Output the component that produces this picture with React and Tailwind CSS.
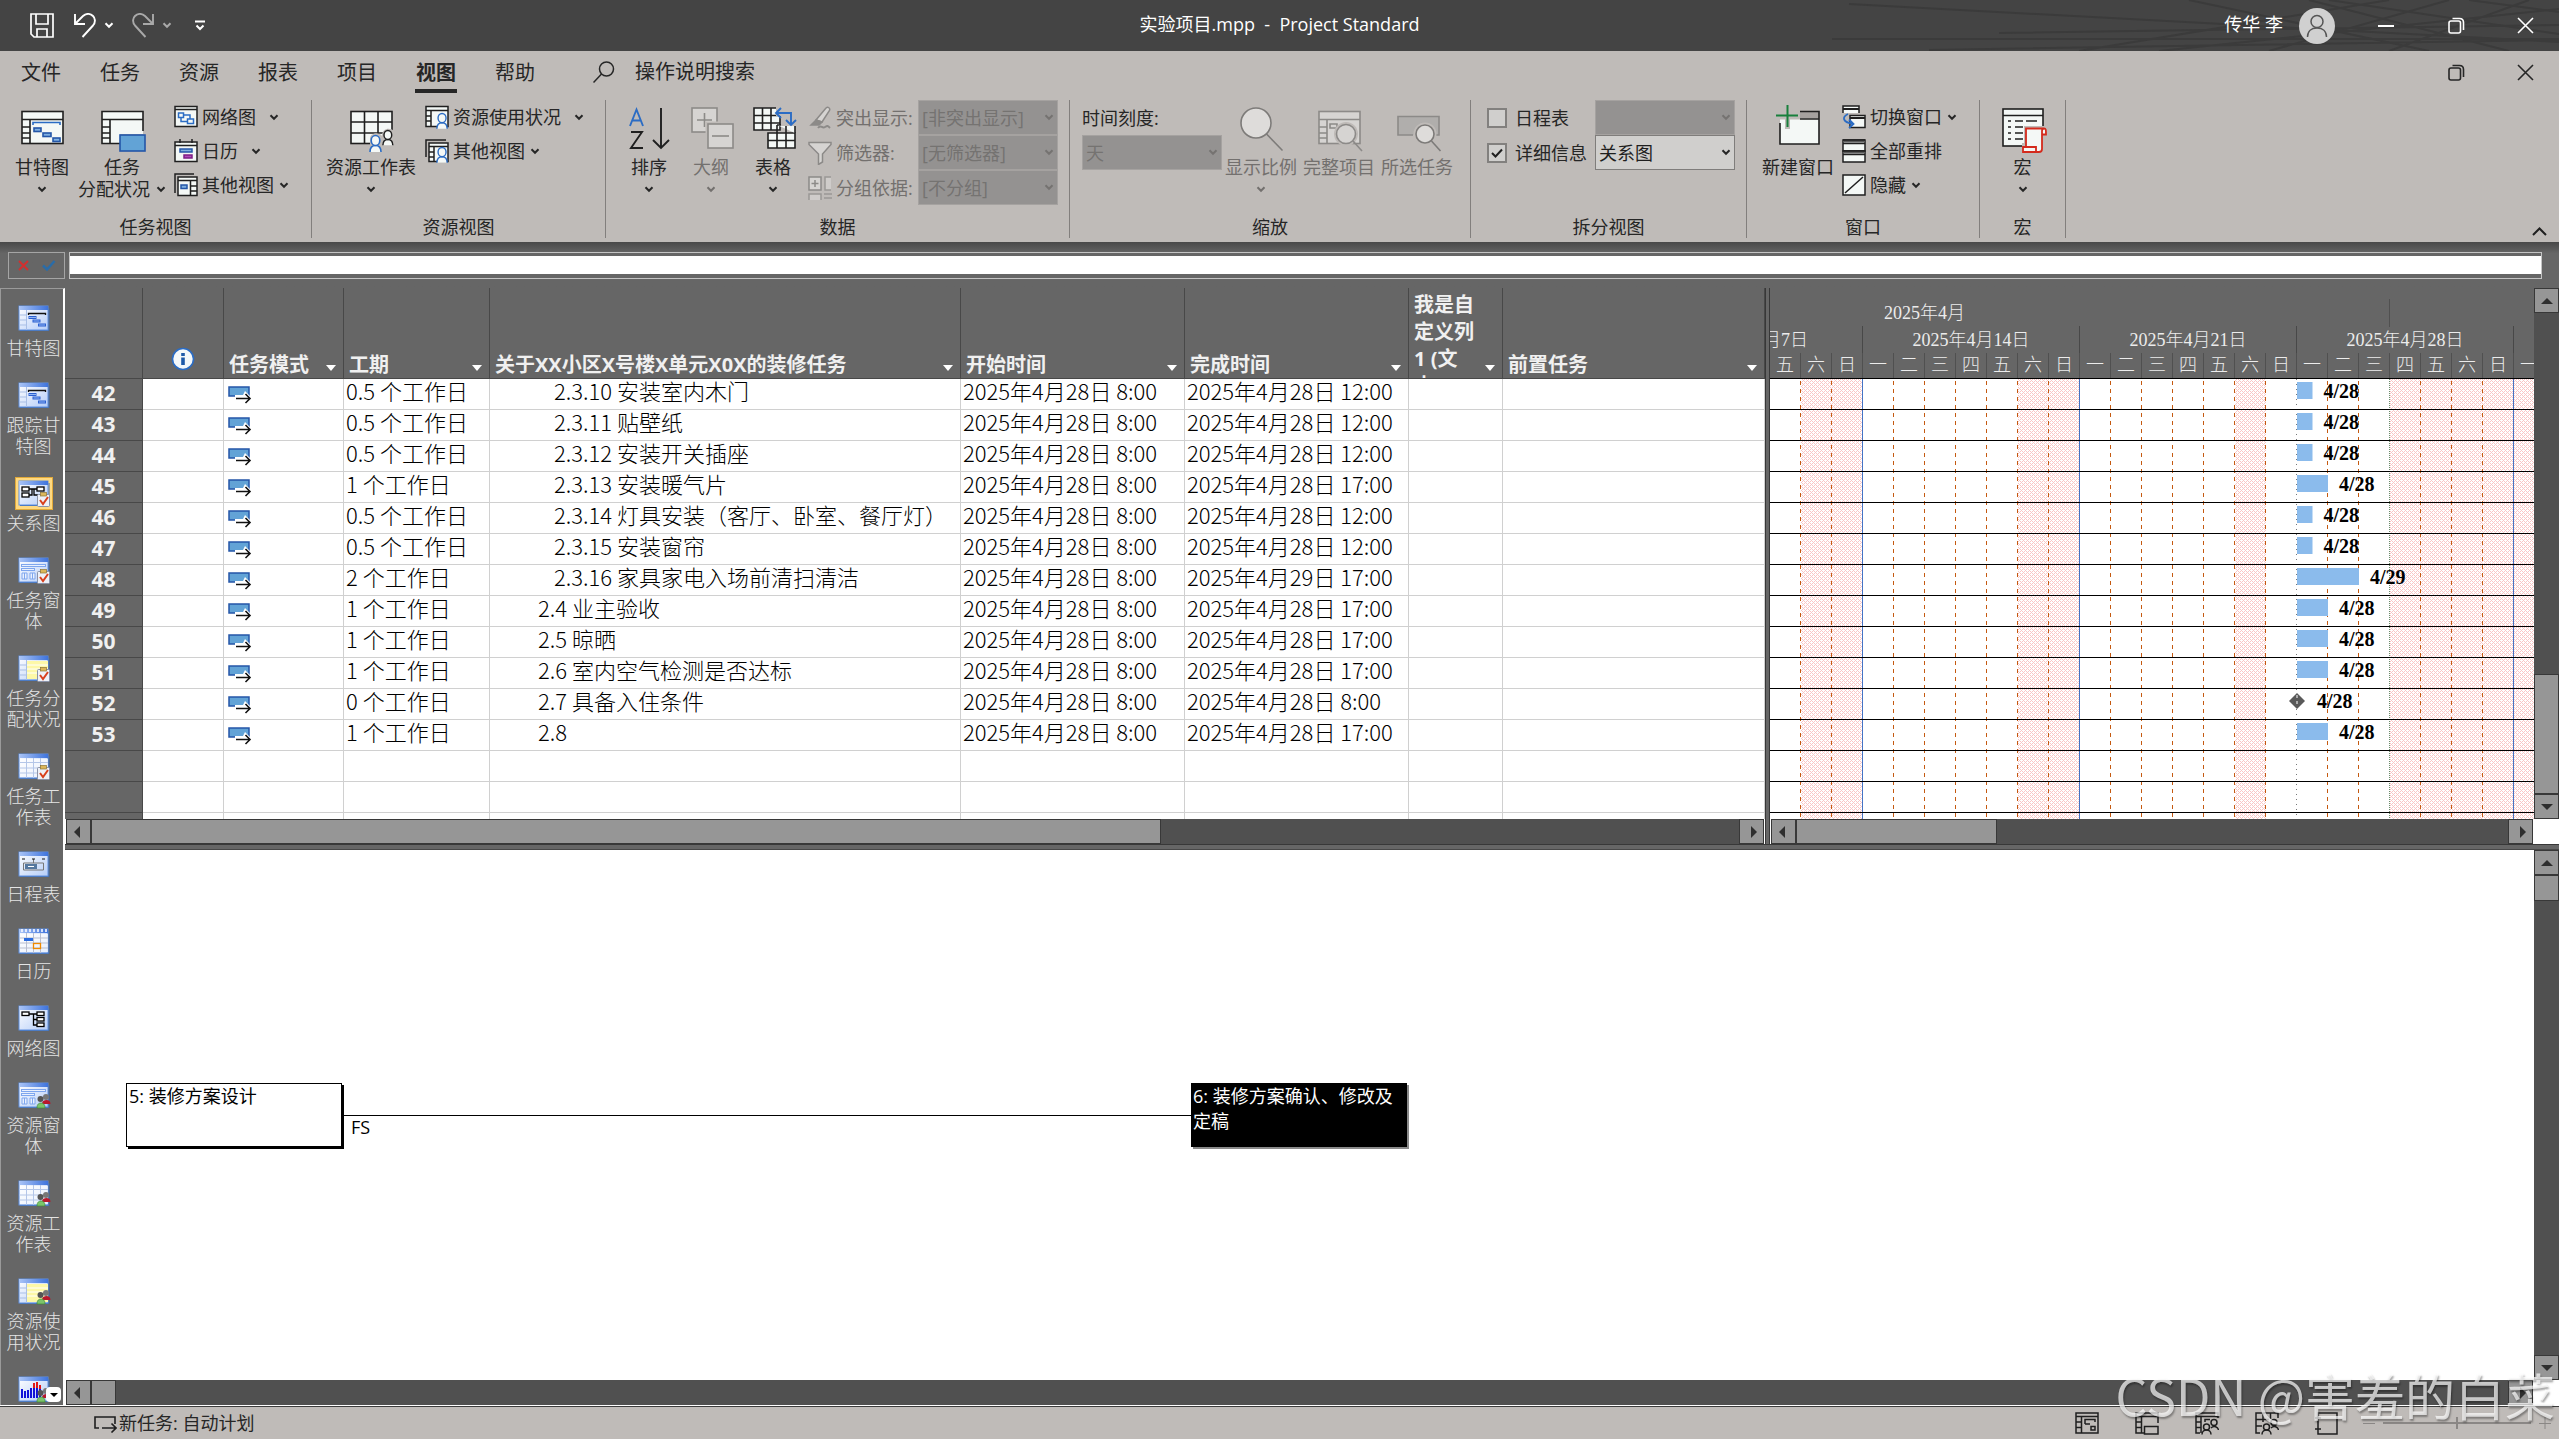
import { useState } from "react";

const UI_FONT = "font-['Open_Sans','Noto_Sans_CJK_SC',sans-serif]";
const SHEET_FONT = "font-['Noto_Sans_CJK_SC',sans-serif]";
const SONG_FONT = "font-['Liberation_Serif','Noto_Sans_CJK_SC',serif]";

const tabs = ["文件", "任务", "资源", "报表", "项目", "视图", "帮助"];

const tasks = [
  { id: 42, duration: "0.5 个工作日", name: "2.3.10 安装室内木门", level: 3, finish: "2025年4月28日 12:00", days: 0.5, label: "4/28" },
  { id: 43, duration: "0.5 个工作日", name: "2.3.11 贴壁纸", level: 3, finish: "2025年4月28日 12:00", days: 0.5, label: "4/28" },
  { id: 44, duration: "0.5 个工作日", name: "2.3.12 安装开关插座", level: 3, finish: "2025年4月28日 12:00", days: 0.5, label: "4/28" },
  { id: 45, duration: "1 个工作日", name: "2.3.13 安装暖气片", level: 3, finish: "2025年4月28日 17:00", days: 1, label: "4/28" },
  { id: 46, duration: "0.5 个工作日", name: "2.3.14 灯具安装（客厅、卧室、餐厅灯）", level: 3, finish: "2025年4月28日 12:00", days: 0.5, label: "4/28" },
  { id: 47, duration: "0.5 个工作日", name: "2.3.15 安装窗帘", level: 3, finish: "2025年4月28日 12:00", days: 0.5, label: "4/28" },
  { id: 48, duration: "2 个工作日", name: "2.3.16 家具家电入场前清扫清洁", level: 3, finish: "2025年4月29日 17:00", days: 2, label: "4/29" },
  { id: 49, duration: "1 个工作日", name: "2.4 业主验收", level: 2, finish: "2025年4月28日 17:00", days: 1, label: "4/28" },
  { id: 50, duration: "1 个工作日", name: "2.5 晾晒", level: 2, finish: "2025年4月28日 17:00", days: 1, label: "4/28" },
  { id: 51, duration: "1 个工作日", name: "2.6 室内空气检测是否达标", level: 2, finish: "2025年4月28日 17:00", days: 1, label: "4/28" },
  { id: 52, duration: "0 个工作日", name: "2.7 具备入住条件", level: 2, finish: "2025年4月28日 8:00", days: 0, label: "4/28" },
  { id: 53, duration: "1 个工作日", name: "2.8", level: 2, finish: "2025年4月28日 17:00", days: 1, label: "4/28" },
];
const START = "2025年4月28日 8:00";
const DAY = 31;
const ROW = 31;

/* ---------- shared bits ---------- */

function Chevron({ className = "" }) {
  return (
    <svg className={className} width="10" height="7" viewBox="0 0 10 7" fill="none" stroke="currentColor" strokeWidth="2">
      <path d="M1.5 1.2 5 4.8 8.5 1.2" />
    </svg>
  );
}

function Triangle({ dir }) {
  const d = {
    left: "M8 1v12L2 7z",
    right: "M6 1v12l6-6z",
    up: "M1 10h12L7 4z",
    down: "M1 4h12L7 10z",
  }[dir];
  return (
    <svg width="14" height="14" viewBox="0 0 14 14" fill="#2e2e2e">
      <path d={d} />
    </svg>
  );
}

function ScrollButton({ dir, label }) {
  return (
    <button
      aria-label={label}
      className="flex size-[25px] shrink-0 items-center justify-center border border-[#383838] bg-[#969696]"
    >
      <Triangle dir={dir} />
    </button>
  );
}

function HScroll({ thumb }) {
  return (
    <div className="bg-white px-px">
      <div className="flex h-[25px] bg-[#505050]">
        <ScrollButton dir="left" label="向左滚动" />
        <div className={`h-[25px] border border-[#383838] bg-[#969696] ${thumb}`} />
        <div className="flex-1" />
        <ScrollButton dir="right" label="向右滚动" />
      </div>
    </div>
  );
}

function VScroll({ atTop, thumb }) {
  return (
    <div className="flex w-[25px] shrink-0 flex-col bg-[#505050]">
      <ScrollButton dir="up" label="向上滚动" />
      {!atTop && <div className="flex-1" />}
      <div className={`border border-[#383838] bg-[#969696] ${thumb}`} />
      {atTop && <div className="flex-1" />}
      <ScrollButton dir="down" label="向下滚动" />
    </div>
  );
}

/* ---------- ribbon icons ---------- */

const INK = "#1f1f1f";
const PAPER = "#f4f8f6";

function Big({ children }) {
  return (
    <svg className="overflow-visible" width="46" height="46" viewBox="-1 0 46 46" fill="none" stroke={INK} strokeWidth="1.6">
      {children}
    </svg>
  );
}

function Small({ children }) {
  return (
    <svg className="shrink-0" width="24" height="24" viewBox="0 0 24 24" fill="none" stroke={INK} strokeWidth="1.5">
      {children}
    </svg>
  );
}

function Person({ x, y, s = 1, color = "#2b6cc4", halo = PAPER }) {
  return (
    <g transform={`translate(${x} ${y}) scale(${s})`} stroke={color} fill={halo}>
      <path d="M1 17c0-4 2-6.500 5.500-6.500S12 13 12 17" />
      <ellipse cx="6.500" cy="5.500" rx="4.300" ry="5" />
    </g>
  );
}

const GanttIcon = () => (
  <Big>
    <rect x="2" y="4.500" width="41" height="32" fill={PAPER} />
    <path d="M2 12.500h41M10 12.500v24M2 20h8M2 26h8M2 31h8" />
    <path d="M13 18v-2.500h27V18" stroke="#2b6cc4" />
    <g fill="#7fb0e0" stroke="#2456a8">
      <rect x="14" y="21" width="7" height="3.500" />
      <rect x="23" y="26" width="8" height="3.500" />
      <rect x="33" y="31" width="7" height="3.500" />
    </g>
  </Big>
);

const TaskUsageIcon = () => (
  <Big>
    <path d="M20 36.500H2v-32h41V27H20z" fill={PAPER} stroke="none" />
    <path d="M20 36.500H2v-32h41V24M2 12.500h41M10 12.500v24M2 20h8M2 26h8M2 31h8" />
    <rect x="20" y="28" width="25" height="16" fill="#62a3d6" stroke="#2456a8" />
  </Big>
);

const NetworkIcon = () => (
  <Small>
    <rect x="1" y="1.500" width="22" height="20" fill={PAPER} />
    <path d="M1 4.500h22" />
    <g stroke="#2b6cc4">
      <rect x="4.500" y="8" width="5" height="4.500" />
      <rect x="13.500" y="14" width="6" height="4.500" />
      <path d="M7 12.500v4h6.500M9.500 10h6.500v4" />
    </g>
  </Small>
);

const CalendarIcon = () => (
  <Small>
    <rect x="1" y="3" width="22" height="19.500" fill={PAPER} />
    <path d="M1 6.500h22M6 0v4M18 0v4" />
    <rect x="6" y="10" width="12" height="3" fill="#7fb0e0" stroke="#2456a8" />
    <rect x="10" y="16" width="8" height="3" fill="#b14bb8" stroke="#7d1e86" />
  </Small>
);

const OtherViewsIcon = () => (
  <Small>
    <path d="M1 20V1h19" />
    <rect x="4" y="4" width="19" height="18.500" fill={PAPER} />
    <path d="M4 7.500h19M16.500 7.500v15M16.500 13h6.500M16.500 18h6.500" />
    <rect x="7" y="12" width="6" height="3.500" fill="#7fb0e0" stroke="#2456a8" />
  </Small>
);

const ResourceSheetIcon = () => (
  <Big>
    <rect x="2" y="4.500" width="41" height="32" fill={PAPER} />
    <path d="M2 15h41M2 26h41M15.500 4.500v32M29 4.500v32" />
    <path d="M21 45V31c1-6 10-6 12-2 0-8 8-9 12-5v21z" fill="#bfbbb8" stroke="none" />
    <Person x="33" y="23" s="0.900" color={INK} />
    <Person x="20" y="28" />
  </Big>
);

const ResourceUsageIcon = () => (
  <Small>
    <rect x="1" y="1.500" width="22" height="20" fill={PAPER} />
    <path d="M1 5.500h22M6 5.500v16M1 11h5M1 16h5" />
    <Person x="11" y="8" s="0.930" />
  </Small>
);

const ResourceOtherIcon = () => (
  <Small>
    <path d="M1 18V1h20" />
    <rect x="4" y="4" width="19" height="18.500" fill={PAPER} />
    <path d="M4 7.500h19M9 7.500v15M4 13h5M4 18h5" />
    <Person x="11" y="8" s="0.930" />
  </Small>
);

const SortIcon = () => (
  <Big>
    <g strokeWidth="1.900">
      <path d="M3 19 9.500 2.500 16 19M5.500 13.500h8" stroke="#2b6cc4" />
      <path d="M4 25h11L4 41h12" />
      <path d="M34 1v40M26 33l8 8 8-8" />
    </g>
  </Big>
);

const OutlineIcon = () => (
  <Big>
    <g stroke="#8c8a88" fill="#d6d4d2">
      <rect x="3" y="1" width="25" height="24" />
      <path d="M15.500 6v14M8 13h15" />
      <rect x="19" y="17" width="25" height="24" stroke="#bfbbb8" strokeWidth="5" />
      <rect x="19" y="17" width="25" height="24" />
      <path d="M23 29h17" />
    </g>
  </Big>
);

const TablesIcon = () => (
  <Big>
    <path d="M3 1h26v22H3z" fill={PAPER} />
    <path d="M3 8.500h26M3 16h26M11.500 1v22M20 1v22" />
    <path d="M17 26h27v15H17z" fill={PAPER} />
    <path d="M26 18h18v8" fill={PAPER} />
    <path d="M17 33.500h27M26 18v23M35 18v23" />
    <path d="M25 0h20v19H30V9h-5z" fill="#bfbbb8" stroke="none" />
    <path d="M40 18V6H25M30 1l-5 5 5 5M35 13l5 5 5-5" stroke="#2b6cc4" strokeWidth="1.900" />
  </Big>
);

const HighlightIcon = () => (
  <Small>
    <g stroke="#8c8a88" fill="#d6d4d2">
      <path d="M18 2c2-1.500 4.500 0 3.500 2.500L14 16l-6-2z" />
      <path d="M8 14l6 2-3 3H3z" fill="#8c8a88" />
      <path d="M10 22c3-4 4 1 7-1s3-1 5 1" fill="none" strokeWidth="2" />
    </g>
  </Small>
);

const FilterIcon = () => (
  <Small>
    <path d="M1 1.500h22v2L14.500 13v8l-4 2.500V13L1 3.500z" fill="#d6d4d2" stroke="#8c8a88" />
  </Small>
);

const GroupByIcon = () => (
  <Small>
    <g stroke="#8c8a88" fill="#d6d4d2">
      <rect x="1" y="1" width="12" height="13" />
      <path d="M7 4v7M3.500 7.500h7" />
      <path d="M23 1h-6v13h6M1 24v-6h12v6M16 18h8M16 22h8" opacity="0.700" />
    </g>
  </Small>
);

const ZoomIcon = () => (
  <Big>
    <g stroke="#7d7b79" fill="#dedcda">
      <circle cx="17" cy="16" r="15" />
      <path d="m27.500 27 16 16.500" />
    </g>
  </Big>
);

const EntireProjectIcon = () => (
  <Big>
    <g stroke="#8c8a88" fill="#d6d4d2">
      <rect x="2" y="4.500" width="41" height="32" />
      <path d="M2 12.500h41M10 12.500v24M2 20h8M2 26h8M2 31h8M13 17h7v4h-7z" />
      <circle cx="29" cy="27" r="12" fill="#bfbbb8" stroke="none" />
      <circle cx="29" cy="27" r="9.500" />
      <path d="m36 34 9 10" />
    </g>
  </Big>
);

const SelectedTasksIcon = () => (
  <Big>
    <g stroke="#7d7b79">
      <path d="M18 28H3V9.500h41V28h-3" fill="#b0aeac" stroke="#8c8a88" />
      <circle cx="30" cy="27" r="11.500" fill="#bfbbb8" stroke="none" />
      <circle cx="30" cy="27" r="9" fill="#dedcda" />
      <path d="m36.500 34 9 10" />
    </g>
  </Big>
);

const NewWindowIcon = () => (
  <Big>
    <path d="M4 11v26h39V4.500H24v8H4z" fill={PAPER} stroke="none" />
    <path d="M24 4.500h19v7H24z" fill="#a5a19f" stroke="none" />
    <path d="M24 4.500h19v32.500H4V16M24 12h19" />
    <path d="M9 0h5v22H9zM0 6h22v5H0z" fill="#bfbbb8" stroke="none" />
    <path d="M11.500-2v22M0 8.500h22" stroke="#18803c" strokeWidth="2" />
  </Big>
);

const SwitchWindowIcon = () => (
  <Small>
    <path d="M1 8V1h16v7" fill={PAPER} />
    <path d="M1 4h16" strokeWidth="2" />
    <rect x="8" y="10.500" width="15" height="12" fill={PAPER} />
    <path d="M8 13h15" strokeWidth="2" />
    <path d="M6 9c-6 3-6 8 5 10M7 14.500l4.500 4.500L7 23" stroke="#2b6cc4" strokeWidth="1.800" />
  </Small>
);

const ArrangeIcon = () => (
  <Small>
    <rect x="1" y="1" width="22" height="11" fill={PAPER} />
    <rect x="1" y="12" width="22" height="11" fill={PAPER} />
    <path d="M1 2.500h22M1 13.500h22" stroke="#5a5a5a" strokeWidth="2" />
    <path d="M1 1h22M1 4.500h22M1 12h22M1 15.500h22" />
  </Small>
);

const HideIcon = () => (
  <Small>
    <rect x="1" y="2" width="22" height="20" fill={PAPER} />
    <path d="M3 20 21 4" />
  </Small>
);

const MacroIcon = () => (
  <Big>
    <rect x="2" y="2" width="40" height="37" fill={PAPER} />
    <path d="M2 8.500h40" />
    <path d="M7 14h3M14 14h8M25 14h11M7 20h3M14 20h8M7 26h3M14 26h8M7 32h3M14 32h8" />
    <path d="M43 19h-20v17h-2v5h22z" fill="#bfbbb8" stroke="none" />
    <path d="M25 40V21.500h18c2 0 2 1 2 6h-4V42c0 2-1 3-3 3H22v-5h13v5M41 27v-3c0-2 1-2.500 2-2.500" fill={PAPER} stroke="#d42a1c" strokeWidth="1.800" />
  </Big>
);

/* ---------- ribbon ---------- */

function RibbonGroup({ title, className, children }) {
  return (
    <section className={`flex shrink-0 flex-col border-r border-[#827f7d] ${className}`}>
      <div className="flex h-[116px]">{children}</div>
      <h2 className="text-center text-lg leading-[22px]">{title}</h2>
    </section>
  );
}

function BigButton({ icon, label, second, chevron = true, disabled, className }) {
  return (
    <button
      disabled={disabled}
      className={`flex flex-col items-center gap-[3px] pt-[7px] disabled:text-[#73706e] ${className}`}
    >
      {icon}
      <span className="text-lg leading-[22px] whitespace-nowrap">{label}</span>
      <span className="flex h-[16px] items-center gap-[6px] text-lg leading-[16px] whitespace-nowrap">
        {second}
        {chevron && <Chevron />}
      </span>
    </button>
  );
}

function SmallButton({ icon, label, chevron = true, wide }) {
  return (
    <button className={`flex h-[34px] items-center text-lg whitespace-nowrap ${wide ? "gap-[13px]" : "gap-[5px]"}`}>
      <span className="flex items-center gap-1">
        {icon}
        {label}
      </span>
      {chevron && <Chevron />}
    </button>
  );
}

function Dropdown({ id, label, value, disabled }) {
  return (
    <div className="relative h-[35px] w-[140px]">
      <select
        id={id}
        aria-label={label}
        disabled={disabled}
        defaultValue={value}
        className="size-full appearance-none border border-[#7f7d7b] bg-[#d0cfcd] pl-[3px] text-lg text-[#1f1f1f] disabled:border-[#a5a2a0] disabled:bg-[#949291] disabled:text-[#757371] disabled:opacity-100"
      >
        <option>{value}</option>
      </select>
      <Chevron className={`pointer-events-none absolute top-[14px] right-[4px] ${disabled ? "text-[#757371]" : ""}`} />
    </div>
  );
}

function DataRow({ id, icon, label, value }) {
  return (
    <div className="flex h-[35px] items-center">
      <label htmlFor={id} className="flex w-[110px] items-center gap-1 text-lg whitespace-nowrap text-[#73706e]">
        {icon}
        {label}
      </label>
      <Dropdown id={id} value={value} disabled />
    </div>
  );
}

function SplitRow({ id, label, checked, value, disabled }) {
  const [on, setOn] = useState(checked);
  return (
    <div className="flex h-[35px] items-center">
      <label htmlFor={id} className="flex w-[108px] items-center gap-2 text-lg whitespace-nowrap">
        <span className="relative flex size-5">
          <input
            id={id}
            type="checkbox"
            checked={on}
            onChange={(e) => setOn(e.target.checked)}
            className="size-5 appearance-none border-2 border-[#82807e] bg-[#d0cfcd]"
          />
          {on && (
            <svg className="pointer-events-none absolute inset-0" width="20" height="20" viewBox="0 0 20 20" fill="none" stroke={INK} strokeWidth="2">
              <path d="m5 10 3.500 3.500L15 6.500" />
            </svg>
          )}
        </span>
        {label}
      </label>
      <Dropdown label={`${label}视图`} value={value} disabled={disabled} />
    </div>
  );
}

function Ribbon() {
  return (
    <div className="flex h-[144px] items-start bg-[#bfbbb8] pt-[2px] text-[#262626]">
      <RibbonGroup title="任务视图" className="w-[312px]">
        <BigButton className="ml-2 w-[68px]" icon={<GanttIcon />} label="甘特图" />
        <BigButton className="w-[92px]" icon={<TaskUsageIcon />} label="任务" second="分配状况" />
        <div className="ml-[6px] flex flex-col">
          <SmallButton icon={<NetworkIcon />} label="网络图" wide />
          <SmallButton icon={<CalendarIcon />} label="日历" wide />
          <SmallButton icon={<OtherViewsIcon />} label="其他视图" />
        </div>
      </RibbonGroup>
      <RibbonGroup title="资源视图" className="w-[294px]">
        <BigButton className="ml-[13px] w-[92px]" icon={<ResourceSheetIcon />} label="资源工作表" />
        <div className="ml-2 flex flex-col">
          <SmallButton icon={<ResourceUsageIcon />} label="资源使用状况" wide />
          <SmallButton icon={<ResourceOtherIcon />} label="其他视图" />
        </div>
      </RibbonGroup>
      <RibbonGroup title="数据" className="w-[464px]">
        <BigButton className="ml-3 w-[62px]" icon={<SortIcon />} label="排序" />
        <BigButton className="w-[62px]" icon={<OutlineIcon />} label="大纲" disabled />
        <BigButton className="w-[62px]" icon={<TablesIcon />} label="表格" />
        <div className="ml-1 flex flex-col">
          <DataRow id="highlight" icon={<HighlightIcon />} label="突出显示:" value="[非突出显示]" />
          <DataRow id="filter" icon={<FilterIcon />} label="筛选器:" value="[无筛选器]" />
          <DataRow id="groupby" icon={<GroupByIcon />} label="分组依据:" value="[不分组]" />
        </div>
      </RibbonGroup>
      <RibbonGroup title="缩放" className="w-[401px]">
        <div className="ml-3 flex flex-col">
          <label htmlFor="timescale" className="flex h-[35px] items-center text-lg">
            时间刻度:
          </label>
          <Dropdown id="timescale" value="天" disabled />
        </div>
        <BigButton className="w-[78px]" icon={<ZoomIcon />} label="显示比例" disabled />
        <BigButton className="w-[78px]" icon={<EntireProjectIcon />} label="完整项目" chevron={false} disabled />
        <BigButton className="w-[78px]" icon={<SelectedTasksIcon />} label="所选任务" chevron={false} disabled />
      </RibbonGroup>
      <RibbonGroup title="拆分视图" className="w-[276px]">
        <div className="ml-4 flex flex-col">
          <SplitRow id="timeline" label="日程表" checked={false} value="" disabled />
          <SplitRow id="details" label="详细信息" checked value="关系图" />
        </div>
      </RibbonGroup>
      <RibbonGroup title="窗口" className="w-[233px]">
        <BigButton className="ml-3 w-[78px]" icon={<NewWindowIcon />} label="新建窗口" chevron={false} />
        <div className="ml-[5px] flex flex-col">
          <SmallButton icon={<SwitchWindowIcon />} label="切换窗口" />
          <SmallButton icon={<ArrangeIcon />} label="全部重排" chevron={false} />
          <SmallButton icon={<HideIcon />} label="隐藏" />
        </div>
      </RibbonGroup>
      <RibbonGroup title="宏" className="w-[86px]">
        <BigButton className="w-[85px]" icon={<MacroIcon />} label="宏" />
      </RibbonGroup>
      <button aria-label="折叠功能区" className="mr-3 ml-auto self-end pb-[6px]">
        <svg width="15" height="9" viewBox="0 0 15 9" fill="none" stroke={INK} strokeWidth="2">
          <path d="m1 8 6.500-6.500L14 8" />
        </svg>
      </button>
    </div>
  );
}

/* ---------- title bar and tabs ---------- */

function RestoreGlyph() {
  return (
    <svg width="17" height="17" viewBox="0 0 17 17" fill="none" stroke="currentColor" strokeWidth="1.600">
      <rect x="1" y="4" width="11.500" height="12" rx="2" />
      <path d="M4.500 1.500h7c2.500 0 4 1.500 4 4V13" />
    </svg>
  );
}

function CloseGlyph() {
  return (
    <svg width="17" height="17" viewBox="0 0 17 17" fill="none" stroke="currentColor" strokeWidth="1.600">
      <path d="m1 1 15 15M16 1 1 16" />
    </svg>
  );
}

function TitleBar() {
  return (
    <header className="relative flex h-[51px] items-center bg-[#444] text-white">
      <svg className="absolute top-0 right-0" width="730" height="51" viewBox="0 0 730 51" fill="none" stroke="#3b3b3b" strokeWidth="2">
        <path d="M20 4 730 42M170 33l560-8M3 39h727M100 50l630-10M250 51 560 0M360 0l240 51M500 0l230 34M440 51 620 0M560 51 700 0M480 0l200 51M330 51l400-42M640 0l90 12" />
      </svg>
      <div className="relative flex flex-1 items-center">
        <button aria-label="保存" className="ml-[30px]">
          <svg width="24" height="25" viewBox="0 0 24 25" fill="none" stroke="currentColor" strokeWidth="1.700">
            <path d="M1 1h22v23H4l-3-3zM6 1v10h12V1M7 24v-8h10v8" />
          </svg>
        </button>
        <button aria-label="撤消" className="ml-5 flex items-center gap-2">
          <svg width="22" height="25" viewBox="0 0 22 25" fill="none" stroke="currentColor" strokeWidth="1.900">
            <path d="M1 1v10h10M1.500 10.500 9 3c4-3.500 8-2 10 0s3 6 0 9.500L8.500 24" />
          </svg>
          <Chevron />
        </button>
        <button aria-label="恢复" className="ml-[18px] flex items-center gap-2 text-[#a9a9a9]">
          <svg width="22" height="25" viewBox="0 0 22 25" fill="none" stroke="currentColor" strokeWidth="1.900">
            <path d="M21 1v10H11M20.500 10.500 13 3C9 -.5 5 1 3 3s-3 6 0 9.500L13.500 24" />
          </svg>
          <Chevron />
        </button>
        <button aria-label="自定义快速访问工具栏" className="ml-[22px]">
          <svg width="12" height="11" viewBox="0 0 12 11" fill="none" stroke="currentColor" strokeWidth="2">
            <path d="M1 1.500h10M2.500 5.500 6 9l3.500-3.500" />
          </svg>
        </button>
      </div>
      <h1 className="relative pb-1 text-lg whitespace-pre">实验项目.mpp  -  Project Standard</h1>
      <div className="relative flex flex-1 items-center justify-end">
        <span className="pb-1 text-lg">传华 李</span>
        <span className="mx-4 flex size-9 items-center justify-center rounded-full bg-[#d0d0d0]">
          <svg width="22" height="24" viewBox="0 0 22 24" fill="none" stroke="#555" strokeWidth="1.500">
            <circle cx="11" cy="7.500" r="6" />
            <path d="M1.500 23c0-6 4-9 9.500-9s9.500 3 9.500 9" />
          </svg>
        </span>
        <button aria-label="最小化" className="flex w-[70px] justify-center">
          <span className="h-[2px] w-4 bg-white" />
        </button>
        <button aria-label="还原" className="flex w-[70px] justify-center">
          <RestoreGlyph />
        </button>
        <button aria-label="关闭" className="flex w-[68px] justify-center">
          <CloseGlyph />
        </button>
      </div>
    </header>
  );
}

function TabStrip() {
  return (
    <nav className="flex h-[47px] items-start bg-[#bfbbb8] pl-5 text-xl text-[#262626]">
      {tabs.map((tab) => (
        <a key={tab} href="#" className="mr-[37px] flex h-[42px] w-[42px] flex-col items-center justify-between last-of-type:mr-0">
          <span className={`h-[38px] leading-[44px] ${tab === "视图" ? "font-bold" : ""}`}>{tab}</span>
          {tab === "视图" && <span className="h-1 w-full bg-[#262626]" />}
        </a>
      ))}
      <label className="ml-[57px] flex h-[42px] items-center gap-[20px]">
        <svg width="22" height="22" viewBox="0 0 22 22" fill="none" stroke="currentColor" strokeWidth="1.500">
          <circle cx="13.500" cy="8" r="7" />
          <path d="m8.500 13-8 8.500" />
        </svg>
        <input
          aria-label="操作说明搜索"
          placeholder="操作说明搜索"
          className="w-[200px] bg-transparent placeholder:text-[#262626] placeholder:opacity-100"
        />
      </label>
      <div className="ml-auto flex h-[42px] items-center">
        <button aria-label="还原文档窗口" className="flex w-[70px] justify-center">
          <RestoreGlyph />
        </button>
        <button aria-label="关闭文档窗口" className="flex w-[68px] justify-center">
          <CloseGlyph />
        </button>
      </div>
    </nav>
  );
}

function EntryBar() {
  return (
    <div className="h-[46px] bg-gradient-to-b from-[#484848] to-[#666] to-25% pt-[10px]">
      <div className="flex h-[27px] gap-1 pr-[17px] pl-2">
        <div className="flex w-[57px] items-center justify-between border border-[#a5a5a5] pr-[8px] pl-[9px]">
          <button aria-label="取消">
            <svg width="12" height="11" viewBox="0 0 12 11" fill="none" stroke="#d32f2f" strokeWidth="2">
              <path d="m1 1 9 9M10 1 1 10" />
            </svg>
          </button>
          <button aria-label="输入">
            <svg width="14" height="11" viewBox="0 0 14 11" fill="none" stroke="#2a6ca8" strokeWidth="2.500">
              <path d="m1 5.500 4 4L12.500 1" />
            </svg>
          </button>
        </div>
        <div className="flex-1 border border-[#c4c4c4] pt-[3px]">
          <input aria-label="数据编辑栏" className="block h-[18px] w-full bg-white" />
        </div>
      </div>
    </div>
  );
}

/* ---------- view bar ---------- */

function ViewIcon({ kind, badge }) {
  return (
    <svg className="shrink-0 overflow-visible" width="30" height="25" viewBox="0 0 30 25" fill="none">
      <defs>
        <linearGradient id="viewBg" x1="0" y1="0" x2="1" y2="1">
          <stop offset="0" stopColor="#fff" />
          <stop offset="1" stopColor="#b5cdf8" />
        </linearGradient>
        <linearGradient id="viewTop" x1="0" y1="0" x2="1" y2="0">
          <stop offset="0" stopColor="#a9c4f7" />
          <stop offset="1" stopColor="#3f74dc" />
        </linearGradient>
      </defs>
      <path d="M1 24.500h29V2" stroke="#3d68a8" />
      <rect x="0" y="0" width="29" height="24" fill="url(#viewBg)" stroke="#5f8fe0" />
      <rect x="0" y="0" width="29" height="4" fill="url(#viewTop)" />
      {kind === "gantt" && (
        <g>
          <path d="M7.500 4v20M0 9h7M0 14h7M0 19h7" stroke="#a9bfe6" />
          <path d="M9.500 9V7.500h17V9" stroke="#111" strokeWidth="1.300" />
          <g fill="#8fb4f5" stroke="#2b5fcf">
            <rect x="10" y="10.500" width="7" height="2" />
            <rect x="14" y="14" width="7" height="2" />
            <rect x="19.500" y="18" width="7" height="2" />
          </g>
        </g>
      )}
      {kind === "relation" && (
        <g stroke="#000" strokeWidth="1.300" fill="#fff">
          <rect x="3" y="6" width="7" height="4" />
          <rect x="3" y="12" width="7" height="4" />
          <rect x="18" y="6" width="7" height="4" />
          <path d="M10 8h3v6h-3M13 8h5M15 8v6h4" fill="none" />
        </g>
      )}
      {kind === "form" && (
        <g stroke="#7ea6ee" fill="#eaf1fe">
          <rect x="2.500" y="6.500" width="24" height="2" />
          <rect x="2.500" y="10.500" width="13" height="2" />
          <path d="M3 15h5v6H3zM11 15h5v6h-5zM5.500 15v6M13.500 15v6" />
        </g>
      )}
      {kind === "usage" && (
        <g>
          <rect x="8" y="5" width="21" height="18" fill="#fdf8a8" />
          <path d="M8 9h21M8 13h21M8 17h21" stroke="#fff" />
          <path d="M7.500 4v20M0 9h7M0 14h7M0 19h7" stroke="#a9bfe6" />
        </g>
      )}
      {kind === "sheet" && (
        <g>
          <rect x="1" y="5" width="28" height="18" fill="#fff" opacity="0.700" />
          <path d="M0 8.500h29M0 14h29M0 19h29M7.500 4v20M14.500 4v20M21.500 4v20" stroke="#b4c6e8" />
        </g>
      )}
      {kind === "timeline" && (
        <g>
          <path d="M4.500 11h20v7h-20zM14.500 7v4" stroke="#777" />
          <path d="M3 7h3M13 7h3M23 7h3" stroke="#111" />
          <rect x="6" y="12" width="12" height="5" fill="#56789f" />
          <path d="M9 14.500h6" stroke="#fff" />
        </g>
      )}
      {kind === "calendar" && (
        <g>
          <rect x="1" y="5" width="28" height="18" fill="#fff" opacity="0.700" />
          <path d="M0 9h29M0 14h29M0 19h29M7.500 4v20M14.500 4v20M21.500 4v20" stroke="#b9bfd0" />
          <path d="M3 0v3M7 0v3M11 0v3M15 0v3M19 0v3M23 0v3M27 0v3" stroke="#fff" strokeWidth="1.500" />
          <rect x="5" y="9" width="9" height="3" fill="#2b6cdf" />
          <rect x="14.500" y="14.500" width="7" height="5" stroke="#f08a00" strokeWidth="1.300" />
        </g>
      )}
      {kind === "network" && (
        <g stroke="#000" strokeWidth="1.300" fill="#fff">
          <path d="M10 8h8M14.500 8v11H18M14.500 13.500H18" fill="none" />
          <rect x="3" y="6" width="7" height="3.500" />
          <rect x="18" y="6" width="7" height="3.500" />
          <rect x="18" y="11.500" width="7" height="3.500" />
          <rect x="18" y="17" width="7" height="3.500" />
        </g>
      )}
      {kind === "graph" && (
        <g>
          <path d="M3 21v-9M6 21v-7M9 21v-8M12 21V11M15 21V9M18 21V9M21 21V10" stroke="#1212d8" strokeWidth="2" />
          <path d="M15 11V6M18 11V5M21 12V8" stroke="#e01818" strokeWidth="2" />
        </g>
      )}
      {badge === "task" && (
        <g>
          <rect x="18.500" y="13.500" width="12" height="12" rx="1" fill="#eef1f8" stroke="#8b93a8" />
          <rect x="21.500" y="11.500" width="6" height="3.500" fill="#dcb75a" stroke="#8d7434" strokeWidth="0.700" />
          <path d="m21 19 3 4 5-7" stroke="#d8401e" strokeWidth="2" />
        </g>
      )}
      {badge === "people" && (
        <g>
          <circle cx="27" cy="14" r="3" fill="#777" />
          <circle cx="21.500" cy="16" r="3" fill="#555" />
          <path d="M23 21c0-3 2-4 4.500-4s4 1.500 4 4z" fill="#b8182c" />
          <path d="M18 25c0-4 2-5 4-5s4 1 4 5z" fill="#7cc46a" stroke="#3c8a34" strokeWidth="0.700" />
        </g>
      )}
    </svg>
  );
}

const views = [
  { label: "甘特图", kind: "gantt" },
  { label: "跟踪甘特图", kind: "gantt" },
  { label: "关系图", kind: "relation", badge: "task", active: true },
  { label: "任务窗体", kind: "form", badge: "task" },
  { label: "任务分配状况", kind: "usage", badge: "task" },
  { label: "任务工作表", kind: "sheet", badge: "task" },
  { label: "日程表", kind: "timeline" },
  { label: "日历", kind: "calendar" },
  { label: "网络图", kind: "network" },
  { label: "资源窗体", kind: "form", badge: "people" },
  { label: "资源工作表", kind: "sheet", badge: "people" },
  { label: "资源使用状况", kind: "usage", badge: "people" },
];

function ViewBar() {
  return (
    <aside className="relative w-[65px] shrink-0 overflow-hidden border-t border-l border-[#9a9a9a] border-r-2 border-r-white bg-[#666]">
      <div className="flex h-0 flex-col items-center gap-[23px] pt-[17px] pl-[3px]">
        {views.map((v) => (
          <button key={v.label} className="flex w-[56px] shrink-0 flex-col items-center gap-2">
            <span className={v.active ? "-m-1 border border-[#e0a93a] bg-[#ffd980] p-[3px]" : ""}>
              <ViewIcon kind={v.kind} badge={v.badge} />
            </span>
            <span className={`text-lg leading-[21px] font-light text-[#e4e4e4] ${SONG_FONT}`}>{v.label}</span>
          </button>
        ))}
        <button aria-label="资源图表" className="w-[56px] shrink-0 pl-[13px]">
          <ViewIcon kind="graph" badge="people" />
        </button>
      </div>
      <button
        aria-label="更多视图"
        className="absolute right-[2px] bottom-[3px] flex size-[15px] items-center justify-center rounded-sm bg-white"
      >
        <svg width="8" height="4" viewBox="0 0 8 4">
          <path d="M0 0h8L4 4z" />
        </svg>
      </button>
    </aside>
  );
}

/* ---------- task sheet ---------- */

function HeadCell({ children, tall }) {
  return (
    <th className="border-r border-b border-[#484848] p-0 text-left align-bottom">
      <div className={`flex h-[90px] justify-between overflow-hidden pr-[7px] pl-[5px] ${tall ? "items-start pt-[3px]" : "items-end"}`}>
        <span className={tall ? "w-[60px] leading-[27px]" : "leading-[27px] whitespace-nowrap"}>{children}</span>
        <svg className="mb-[7px] shrink-0 self-end" width="10" height="6" viewBox="0 0 10 6" fill="#fff">
          <path d="M0 0h10L5 6z" />
        </svg>
      </div>
    </th>
  );
}

function ModeIcon() {
  return (
    <svg className="block" width="24" height="18" viewBox="0 0 24 18" fill="none">
      <rect x="1" y="1" width="20" height="9" fill="#62a3d6" stroke="#2456a8" strokeWidth="1.500" />
      <path d="M7 9h8l2-4 6 6v6h-7l-9-3z" fill="#fff" />
      <path d="M8 12.500h14M17.500 8l4.500 4.500-4.500 4.500" stroke="#111" strokeWidth="1.600" />
    </svg>
  );
}

function TaskSheet() {
  const cell = "border-r border-b border-[#d0d0d0] p-0 pl-[2px] pb-2";
  const blanks = [54, 55, 56];
  return (
    <div className="h-[531px] overflow-hidden bg-white">
      <table className="w-full table-fixed border-separate border-spacing-0 text-[22px] leading-[22px] font-light text-black">
        <colgroup>
          <col className="w-[78px]" />
          <col className="w-[81px]" />
          <col className="w-[120px]" />
          <col className="w-[146px]" />
          <col className="w-[471px]" />
          <col className="w-[224px]" />
          <col className="w-[224px]" />
          <col className="w-[94px]" />
          <col />
        </colgroup>
        <thead className="bg-[#666] text-xl font-bold text-[#f0f0f0]">
          <tr>
            <th className="border-r border-b border-[#484848]" />
            <th className="border-r border-b border-[#484848] p-0 align-bottom">
              <div className="flex justify-center pb-[7px]">
                <svg width="24" height="24" viewBox="0 0 24 24">
                  <circle cx="12" cy="12" r="10.500" fill="#f4f8fa" stroke="#2b6cc4" strokeWidth="1.600" />
                  <path d="M12 6v3M12 10.500V18" stroke="#1f5aa8" strokeWidth="3.600" />
                </svg>
              </div>
            </th>
            <HeadCell>任务模式</HeadCell>
            <HeadCell>工期</HeadCell>
            <HeadCell>关于XX小区X号楼X单元X0X的装修任务</HeadCell>
            <HeadCell>开始时间</HeadCell>
            <HeadCell>完成时间</HeadCell>
            <HeadCell tall>我是自定义列1 (文本1)</HeadCell>
            <HeadCell>前置任务</HeadCell>
          </tr>
        </thead>
        <tbody className={`whitespace-nowrap ${SHEET_FONT}`}>
          {tasks.map((t) => (
            <tr key={t.id} className="h-[31px]">
              <th className={`border-r border-b border-[#484848] bg-[#666] p-0 pb-[2px] text-center text-[21px] font-bold text-[#f0f0f0] ${UI_FONT}`}>
                {t.id}
              </th>
              <td className={cell} />
              <td className="border-r border-b border-[#d0d0d0] p-0 pt-[2px] pl-1">
                <ModeIcon />
              </td>
              <td className={cell}>{t.duration}</td>
              <td className={`border-r border-b border-[#d0d0d0] p-0 pb-2 ${t.level === 3 ? "pl-[64px]" : "pl-[48px]"}`}>
                {t.name}
              </td>
              <td className={cell}>{START}</td>
              <td className={cell}>{t.finish}</td>
              <td className={cell} />
              <td className={cell} />
            </tr>
          ))}
          {blanks.map((id) => (
            <tr key={id} className="h-[31px]">
              <th className="border-r border-b border-[#484848] bg-[#666] p-0" />
              {[1, 2, 3, 4, 5, 6, 7, 8].map((c) => (
                <td key={c} className={cell} />
              ))}
            </tr>
          ))}
        </tbody>
      </table>
    </div>
  );
}

/* ---------- gantt chart ---------- */

const weekDays = ["一", "二", "三", "四", "五", "六", "日"];
const chartDays = Array.from({ length: 25 }, (_, i) => weekDays[(i + 4) % 7]);

function Timescale() {
  return (
    <div className={`h-[91px] overflow-hidden border-b border-black bg-[#666] pt-3 text-lg font-light text-[#ececec] ${SONG_FONT}`}>
      <div className="-ml-[310px] flex h-[26px] items-center">
        <div className="w-[930px] shrink-0 border-r border-[#505050] text-center">2025年4月</div>
      </div>
      <div className="-ml-[124px] flex h-[27px] items-center">
        {["2025年4月7日", "2025年4月14日", "2025年4月21日", "2025年4月28日"].map((w) => (
          <div key={w} className="w-[217px] shrink-0 border-r border-[#484848] text-center">
            {w}
          </div>
        ))}
      </div>
      <div className="flex h-[25px] items-stretch">
        {chartDays.map((d, i) => (
          <div key={i} className="w-[31px] shrink-0 border-r border-[#505050] text-center leading-6">
            {d}
          </div>
        ))}
      </div>
    </div>
  );
}

function GanttChart() {
  // chart starts on Friday, April 11; the bars start on Monday, April 28
  const origin = 17 * DAY;
  const lines = Array.from({ length: 24 }, (_, i) => i + 1);
  const off = [
    [1, 2],
    [8, 2],
    [15, 1],
    [20, 6],
  ];
  return (
    <svg className="block h-[440px] w-full bg-white" aria-label="甘特图">
      <defs>
        <pattern id="hatch" width="4" height="4" patternUnits="userSpaceOnUse">
          <path d="M0 0h1v1H0zM2 0h1v1H2zM1 1h1v1H1zM0 2h1v1H0zM2 2h1v1H2zM3 3h1v1H3z" fill="#fac6c6" />
        </pattern>
      </defs>
      {off.map(([d, n]) => (
        <rect key={d} x={d * DAY} y="0" width={n * DAY} height="440" fill="url(#hatch)" />
      ))}
      {lines.map((d) => {
        const x = d * DAY - 0.5;
        if (d === 3 || d === 10 || d === 24) return <path key={d} d={`M${x} 0v440`} stroke="#4472c4" />;
        if (d === 17) return <path key={d} d={`M${x} 0v440`} stroke="#777" strokeDasharray="1 4" />;
        if (d === 20) return <path key={d} d={`M${x} 0v440`} stroke="#6b8a6b" strokeDasharray="1 1" />;
        return <path key={d} d={`M${x} 2v440`} stroke="#c55a11" strokeDasharray="4 4" />;
      })}
      {Array.from({ length: 14 }, (_, i) => (
        <path key={i} d={`M0 ${(i + 1) * ROW - 0.5}h2000`} stroke="#000" />
      ))}
      {tasks.map((t, i) => {
        const y = i * ROW;
        const textX = t.days ? origin + t.days * DAY + 11 : origin + 20;
        return (
          <g key={t.id}>
            {t.days ? (
              <rect x={origin} y={y + 3} width={t.days * DAY} height="17" fill="#8bbbec" />
            ) : (
              <g>
                <path d={`M${origin} ${y + 4}l8 8-8 8-8-8z`} fill="#595959" />
                <path d={`M${origin} ${y + 6}v12`} stroke="#fff" strokeDasharray="3 3" />
              </g>
            )}
            <text x={textX} y={y + 19} className="font-['Liberation_Serif',serif] text-xl font-bold">
              {t.label}
            </text>
          </g>
        );
      })}
    </svg>
  );
}

/* ---------- relationship diagram ---------- */

function RelationshipDiagram() {
  return (
    <div className="relative min-w-0 flex-1 overflow-hidden bg-white text-lg leading-[25px] text-black">
      <div className="absolute top-[265px] left-[278px] h-px w-[848px] bg-black" />
      <div className="absolute top-[233px] left-[61px] h-[64px] w-[216px] border border-black bg-white px-[2px] shadow-[2px_2px_0_#000]">
        5: 装修方案设计
      </div>
      <span className="absolute top-[265px] left-[286px]">FS</span>
      <div className="absolute top-[233px] left-[1126px] h-[64px] w-[216px] border border-black bg-black px-px text-white shadow-[2px_2px_0_#8a8a8a]">
        6: 装修方案确认、修改及定稿
      </div>
    </div>
  );
}

/* ---------- status bar ---------- */

function StatusIcon({ children }) {
  return (
    <svg width="24" height="23" viewBox="0 0 24 23" fill="none" stroke={INK} strokeWidth="1.500">
      {children}
    </svg>
  );
}

function StatusBar() {
  return (
    <footer className="border-t border-white bg-[#bfbbb8]">
      <div className="flex h-[33px] items-center border-t border-[#3c3c3c] pr-[8px] pl-[94px] text-lg text-[#262626]">
        <button className="flex items-center gap-[2px] pb-px">
          <svg className="mt-1" width="23" height="17" viewBox="0 0 23 17" fill="none" stroke={INK} strokeWidth="1.600">
            <path d="M5 12H1V1h20v7M8 12h14M17.500 7.500 22 12l-4.500 4.500" />
          </svg>
          新任务: 自动计划
        </button>
        <div className="ml-auto flex items-center gap-9">
          <button aria-label="甘特图视图">
            <StatusIcon>
              <path d="M1 1h22v20H1zM1 4.500h22M6.500 4.500V21M1 10h5.500M1 15.500h5.500M10 12V7.500h10V10M10 12h5M16 14.500h4V18h-4z" />
            </StatusIcon>
          </button>
          <button aria-label="任务分配状况视图">
            <StatusIcon>
              <path d="M9 21H1V1h22v10M1 4.500h22M6.500 4.500V21M1 10h5.500M1 15.500h5.500M9.500 14.500H23V22H9.500z" />
            </StatusIcon>
          </button>
          <button aria-label="资源使用状况视图">
            <StatusIcon>
              <path d="M5 21H1V1h22v5M1 4.500h22M6 4.500V21M1 10h5M1 15.500h5M10 10V7.500h5" />
              <circle cx="11.500" cy="15" r="3" />
              <circle cx="19" cy="10.500" r="3" />
              <path d="M7 22.500c0-6 9-6 9 0M16 16c3-3 7-1 7.500 2" />
            </StatusIcon>
          </button>
          <button aria-label="资源工作表视图">
            <StatusIcon>
              <path d="M5 21H1V1h22v5M1 7.500h13M1 14h6M8 1v9M15.500 1v6" />
              <circle cx="11.500" cy="15" r="3" />
              <circle cx="19" cy="10.500" r="3" />
              <path d="M7 22.500c0-6 9-6 9 0M16 16c3-3 7-1 7.500 2" />
            </StatusIcon>
          </button>
          <button aria-label="报表视图">
            <StatusIcon>
              <path d="M3 1h19v21H3zM0 6h6M0 17h6" />
            </StatusIcon>
          </button>
        </div>
        <div className="ml-6 flex items-center gap-2 text-[#8a8785]">
          <button aria-label="缩小" className="h-px w-3 bg-[#8a8785]" />
          <div className="relative flex h-3 w-[148px] items-center">
            <div className="h-[2px] w-full bg-[#8a8785]" />
            <input
              aria-label="显示比例"
              type="range"
              className="absolute inset-0 w-full appearance-none bg-transparent [&::-webkit-slider-thumb]:h-3 [&::-webkit-slider-thumb]:w-[2px] [&::-webkit-slider-thumb]:appearance-none [&::-webkit-slider-thumb]:bg-[#8a8785]"
            />
          </div>
          <button aria-label="放大">
            <svg width="12" height="12" viewBox="0 0 12 12" stroke="currentColor">
              <path d="M6 0v12M0 6.500h12" />
            </svg>
          </button>
        </div>
      </div>
    </footer>
  );
}

function App() {
  return (
    <div className={`relative flex h-screen flex-col overflow-hidden bg-[#666] ${UI_FONT}`}>
      <TitleBar />
      <TabStrip />
      <Ribbon />
      <EntryBar />

      <main className="flex min-h-0 flex-1">
        <ViewBar />
        <div className="flex min-w-0 flex-1 flex-col">
          <div className="flex">
            <div className="min-w-0 flex-1">
              <TaskSheet />
              <HScroll thumb="w-[1070px]" />
            </div>
            <div className="w-[5px] border-x border-[#383838] bg-[#666]" />
            <div className="flex w-[789px] shrink-0 bg-white">
              <div className="min-w-0 flex-1">
                <Timescale />
                <GanttChart />
                <HScroll thumb="w-[201px]" />
              </div>
              <div className="flex h-[531px]">
                <VScroll thumb="h-[120px]" />
              </div>
            </div>
          </div>
          <div className="h-[6px] border-y border-[#383838] border-b-[#484848] bg-[#666]" />
          <div className="flex min-h-0 flex-1 bg-white">
            <div className="flex min-w-0 flex-1 flex-col">
              <RelationshipDiagram />
              <HScroll thumb="w-[25px]" />
            </div>
            <div className="mb-[25px] flex">
              <VScroll atTop thumb="h-[26px]" />
            </div>
          </div>
        </div>
      </main>

      <StatusBar />

      <div className="pointer-events-none absolute right-1 bottom-[6px] font-['Noto_Sans_CJK_SC',sans-serif] text-[50px] leading-[78px] font-normal whitespace-nowrap text-white/70 [text-shadow:1px_2px_2px_rgba(0,0,0,0.35)]">
        CSDN @害羞的白菜
      </div>
    </div>
  );
}

export default App;
